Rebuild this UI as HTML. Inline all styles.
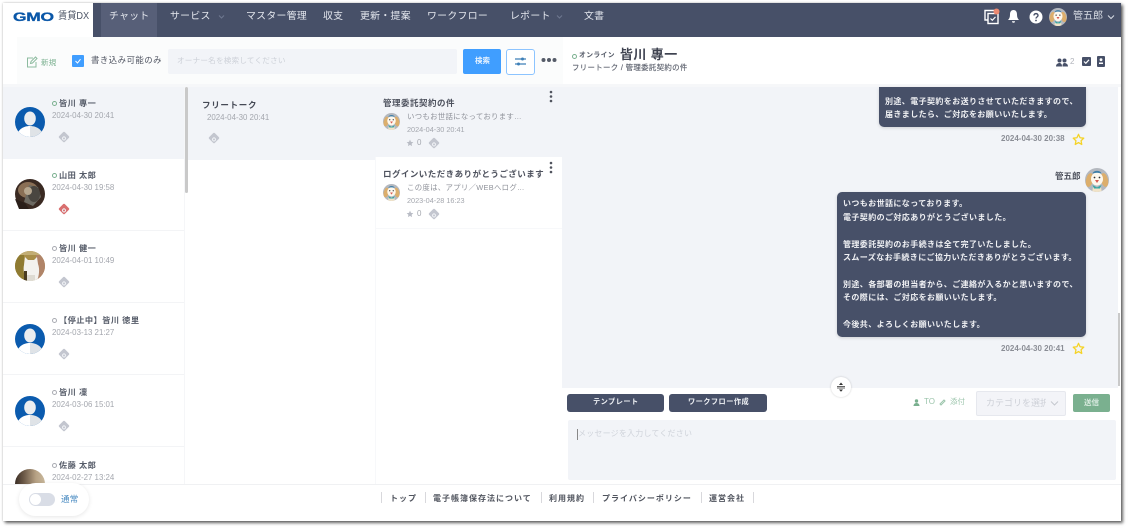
<!DOCTYPE html>
<html lang="ja"><head><meta charset="utf-8"><title>GMO賃貸DX</title>
<style>
html,body{margin:0;padding:0;width:1134px;height:530px;overflow:hidden;background:#fff}
body{position:relative;font-family:"Liberation Sans","Noto Sans CJK JP",sans-serif;color:#4a4f5c;filter:blur(.3px)}
.b{position:absolute}
.t{position:absolute;white-space:nowrap;line-height:12px;height:12px}
.nav{color:#e4e7ee;font-size:9.900px;letter-spacing:.3px;top:11px}
.name{font-size:8.200px;font-weight:bold;color:#555b68;letter-spacing:.45px;margin-top:1px}
.date{font-size:7.900px;color:#a4a7ae;margin-top:1px}
.msg{font-size:8px;font-weight:bold;color:#f0f1f4;letter-spacing:.4px;margin-top:1px}
.foot{font-size:8px;font-weight:bold;color:#50545e;letter-spacing:1px;top:493px}
.sep{position:absolute;width:1px;height:11px;top:492px;background:#d8d8dc}
.ring{position:absolute;width:3px;height:3px;border:1px solid #a9abb2;border-radius:50%}
.ring.on{border-color:#7ab08f}
.dia{position:absolute;width:8px;height:8px;transform:rotate(45deg);background:#c3c6cf;border-radius:1px}
.dia::after{content:"";position:absolute;left:2.500px;top:2.500px;width:2px;height:2px;border:1px solid #eef0f4;border-radius:50%}
.dia.red{background:#d96f6f}
.row{position:absolute;left:3px;width:181px;height:72px;border-bottom:1px solid #f3f4f6;box-sizing:border-box}
svg{position:absolute;display:block}
</style></head>
<body>
<svg width="0" height="0" style="position:absolute">
<defs>
<clipPath id="uc"><circle cx="15" cy="15" r="15"/></clipPath>
<clipPath id="mc"><circle cx="12" cy="12" r="12"/></clipPath>
<symbol id="user" viewBox="0 0 30 30"><circle cx="15" cy="15" r="15" fill="#0b5bae"/><g clip-path="url(#uc)"><ellipse cx="15" cy="11.500" rx="5.800" ry="7" fill="#eceef0"/><path d="M2 30c0-7 6-11 13-11v11z" fill="#fff"/><path d="M15 19c7 0 13 4 13 11H15z" fill="#dfe3e7"/></g></symbol>
<symbol id="masc" viewBox="0 0 24 24"><circle cx="12" cy="12" r="12" fill="#b4b8bf"/><g clip-path="url(#mc)"><path d="M8 19l4 1 4-1 1 6H7z" fill="#f1e3c8"/><ellipse cx="4.500" cy="12" rx="3.500" ry="7" fill="#dcae6c" transform="rotate(12 4.500 12)"/><ellipse cx="19.500" cy="12" rx="3.500" ry="7" fill="#dcae6c" transform="rotate(-12 19.500 12)"/><ellipse cx="12" cy="11" rx="6" ry="6.500" fill="#fdf8ee"/><path d="M7.500 5.500C8.500 2 15.500 2 16.500 5.500c-3-1-6-1-9 0z" fill="#3f7fa8"/><circle cx="9.500" cy="9.500" r=".9" fill="#333"/><circle cx="14.500" cy="9.500" r=".9" fill="#333"/><path d="M10 12h4l-2 3z" fill="#d8584f"/><path d="M7.500 17l4.500 2.500 4.500-2.500-1.500 3.500h-6z" fill="#35a5a5"/></g></symbol>
<symbol id="star" viewBox="0 0 24 24"><path d="M12 2.500l2.900 6.300 6.800.8-5 4.700 1.300 6.800-6-3.400-6 3.400 1.300-6.800-5-4.700 6.800-.8z" fill="none" stroke="#f5d327" stroke-width="2.400" stroke-linejoin="round"/></symbol>
<symbol id="sstar" viewBox="0 0 24 24"><path d="M12 2l3 6.600 7 .8-5.200 4.800 1.400 7L12 17.600 5.800 21.200l1.400-7L2 9.400l7-.8z" fill="#b9bcc5"/></symbol>
</defs></svg>

<!-- window -->
<div class="b" style="left:3px;top:3px;width:1118px;height:518px;background:#fff;box-shadow:2px 2px 3px 0 rgba(0,0,0,.6),0 0 2px rgba(0,0,0,.25)"></div>

<!-- header -->
<div class="b" style="left:93px;top:3px;width:1028px;height:34px;background:#475068"></div>
<div class="b" style="left:101px;top:3px;width:56px;height:34px;background:#575f78"></div>
<div class="t" style="left:13px;top:11px;font-size:12px;font-weight:bold;color:#0a57a8;letter-spacing:-.2px;transform:scaleX(1.450);transform-origin:left;-webkit-text-stroke:.3px #0a57a8">GMO</div>
<div class="t" style="left:58px;top:11px;font-size:10px;color:#4d5566;transform:scaleX(.92);transform-origin:left">賃貸DX</div>
<div class="t nav" style="left:109px">チャット</div>
<div class="t nav" style="left:170px">サービス</div>
<svg style="left:218px;top:14px" width="7" height="6" viewBox="0 0 7 6"><path d="M1 1.500l2.500 2.500L6 1.500" fill="none" stroke="#6f7890"/></svg>
<div class="t nav" style="left:246px">マスター管理</div>
<div class="t nav" style="left:323px">収支</div>
<div class="t nav" style="left:360px">更新・提案</div>
<div class="t nav" style="left:427px">ワークフロー</div>
<div class="t nav" style="left:510px">レポート</div>
<svg style="left:556px;top:14px" width="7" height="6" viewBox="0 0 7 6"><path d="M1 1.500l2.500 2.500L6 1.500" fill="none" stroke="#6f7890"/></svg>
<div class="t nav" style="left:584px">文書</div>
<svg style="left:983px;top:8px" width="17" height="17" viewBox="0 0 17 17"><path d="M5 12H2V2.500h9.500V5" fill="none" stroke="#fff" stroke-width="1.400"/><rect x="5" y="5.500" width="10" height="10" fill="none" stroke="#fff" stroke-width="1.400"/><path d="M7.500 10.500l1.800 1.800 3.200-3.400" fill="none" stroke="#fff" stroke-width="1.200"/><circle cx="13.500" cy="3.500" r="3" fill="#ec8a72"/></svg>
<svg style="left:1007px;top:9px" width="13" height="15" viewBox="0 0 13 15"><path d="M6.500 1C4 1 3 3 3 5.500 3 8 2.500 9.500 1 11h11c-1.500-1.500-2-3-2-5.500C10 3 9 1 6.500 1z" fill="#fff"/><path d="M5 12.300h3a1.500 1.500 0 0 1-3 0z" fill="#fff"/></svg>
<svg style="left:1029px;top:10px" width="14" height="14" viewBox="0 0 14 14"><circle cx="7" cy="7" r="6.500" fill="#fff"/><path d="M5 5.500c0-2.500 4-2.500 4 0 0 1.500-2 1.500-2 3" fill="none" stroke="#475068" stroke-width="1.400"/><circle cx="7" cy="10.500" r=".9" fill="#475068"/></svg>
<svg style="left:1049px;top:8px" width="18" height="18"><use href="#masc" width="18" height="18"/></svg>
<div class="t" style="left:1073px;top:11px;font-size:10px;color:#d8dce4">管五郎</div>
<svg style="left:1107px;top:14px" width="8" height="6" viewBox="0 0 8 6"><path d="M1 1.500l3 3 3-3" fill="none" stroke="#d8dce4"/></svg>

<!-- toolbar -->
<div class="b" style="left:17px;top:37px;width:546px;height:50px;background:#fbfcfc"></div>
<div class="b" style="left:3px;top:84px;width:1118px;height:3px;background:#f6f7f9"></div>
<svg style="left:26px;top:56px" width="12" height="12" viewBox="0 0 12 12"><path d="M7 2H1.500v9h8.500V6" fill="none" stroke="#8dbb9f" stroke-width="1"/><path d="M4.500 7.500l.5-2L9.500 1l1.500 1.500L6.500 7z" fill="none" stroke="#8dbb9f" stroke-width="1"/></svg>
<div class="t" style="left:41px;top:57px;font-size:7.500px;color:#7ab08f;letter-spacing:.3px">新規</div>
<div class="b" style="left:72px;top:55px;width:12px;height:12px;background:#409eff;border-radius:1px"></div>
<svg style="left:72px;top:55px" width="12" height="12" viewBox="0 0 12 12"><path d="M3.500 6l2 2 3-3.800" fill="none" stroke="#fff" stroke-width="1"/></svg>
<div class="t" style="left:91px;top:54px;font-size:8.400px;color:#4f5461;letter-spacing:.5px">書き込み可能のみ</div>
<div class="b" style="left:168px;top:49px;width:289px;height:25px;background:#f2f4f8;border-radius:2px"></div>
<div class="t" style="left:177px;top:55px;font-size:7.600px;color:#cdd1d8;letter-spacing:.2px">オーナー名を検索してください</div>
<div class="b" style="left:463px;top:49px;width:38px;height:25px;background:#409eff;border-radius:2px"></div>
<div class="t" style="left:475px;top:55px;font-size:7.500px;color:#eaf4ff;font-weight:bold">検索</div>
<div class="b" style="left:506px;top:49px;width:27px;height:24px;border:1px solid #8cc4ff;border-radius:3px;background:#fff"></div>
<svg style="left:514px;top:55px" width="13" height="13" viewBox="0 0 13 13"><path d="M1 4h11M1 9h11" stroke="#3d7fb8" stroke-width="1.200"/><circle cx="8.500" cy="4" r="1.500" fill="#3d7fb8"/><circle cx="4.500" cy="9" r="1.500" fill="#3d7fb8"/></svg>
<svg style="left:541px;top:57px" width="16" height="6" viewBox="0 0 16 6"><circle cx="2.500" cy="3" r="2" fill="#555b68"/><circle cx="8" cy="3" r="2" fill="#555b68"/><circle cx="13.500" cy="3" r="2" fill="#555b68"/></svg>

<!-- chat header -->
<div class="ring on" style="left:572px;top:54px"></div>
<div class="t" style="left:579px;top:50px;font-size:6.800px;font-weight:bold;color:#555b68;letter-spacing:.4px">オンライン</div>
<div class="t" style="left:620px;top:49px;font-size:13px;font-weight:bold;color:#3e4250;letter-spacing:.4px">皆川 專一</div>
<div class="t" style="left:572px;top:62px;font-size:7.400px;color:#5f6470;letter-spacing:.35px;-webkit-text-stroke:.15px #5f6470">フリートーク / 管理委託契約の件</div>
<svg style="left:1056px;top:58px" width="12" height="9" viewBox="0 0 12 9"><circle cx="3.500" cy="2.500" r="2" fill="#475068"/><circle cx="8.500" cy="2.500" r="2" fill="#475068"/><path d="M0 8.500c0-2.500 2-3.500 3.500-3.500S6 6 6 8.500zM6.500 8.500c0-2 .5-3.500 2-3.500S12 6 12 8.500z" fill="#475068"/></svg>
<div class="t" style="left:1070px;top:56px;font-size:8px;color:#b1b4bb">2</div>
<div class="b" style="left:1082px;top:57px;width:9px;height:9px;background:#475068;border-radius:1px"></div>
<svg style="left:1082px;top:57px" width="9" height="9" viewBox="0 0 9 9"><path d="M2 4.500l1.800 1.800L7 2.800" fill="none" stroke="#fff" stroke-width="1.200"/></svg>
<svg style="left:1097px;top:56px" width="8" height="11" viewBox="0 0 8 11"><rect width="8" height="11" rx="1" fill="#475068"/><circle cx="4" cy="3.700" r="1.400" fill="#fff"/><rect x="2" y="6.500" width="4" height="1.500" fill="#fff"/></svg>

<!-- column 1 -->
<div class="row" style="top:87px;background:#f2f4f8;border:0"></div>
<div class="row" style="top:159px"></div>
<div class="row" style="top:231px"></div>
<div class="row" style="top:303px"></div>
<div class="row" style="top:375px"></div>
<div class="b" style="left:184px;top:87px;width:1px;height:397px;background:#f5f6f8"></div>
<div class="b" style="left:185px;top:87px;width:3px;height:106px;background:#c9c9c9;border-radius:2px"></div>

<svg style="left:15px;top:107px" width="30" height="30"><use href="#user" width="30" height="30"/></svg>
<div class="ring on" style="left:52px;top:101px"></div><div class="t name" style="left:59px;top:97px">皆川 專一</div>
<div class="t date" style="left:52px;top:109px">2024-04-30 20:41</div><div class="dia" style="left:60px;top:133px"></div>

<svg style="left:15px;top:179px" width="30" height="30" viewBox="0 0 30 30"><circle cx="15" cy="15" r="15" fill="#3a2a22"/><ellipse cx="13" cy="11" rx="10" ry="8" fill="#8a6f55"/><path d="M14 6l9 2 3 10-8 9-9-4z" fill="#6d6a62"/><ellipse cx="19" cy="15" rx="6" ry="8" fill="#4a4640"/><ellipse cx="13" cy="12" rx="4" ry="4" fill="#b6a68e"/><path d="M0 20l10 4 4 6H4z" fill="#2a1f1a"/></svg>
<div class="ring on" style="left:52px;top:173px"></div><div class="t name" style="left:59px;top:169px">山田 太郎</div>
<div class="t date" style="left:52px;top:181px">2024-04-30 19:58</div><div class="dia red" style="left:60px;top:205px"></div>

<svg style="left:15px;top:251px" width="30" height="30" viewBox="0 0 30 30"><clipPath id="c2"><circle cx="15" cy="15" r="15"/></clipPath><g clip-path="url(#c2)"><rect width="30" height="30" fill="#a98f4a"/><rect x="0" width="9" height="30" fill="#8f7b32"/><rect x="21" width="9" height="30" fill="#b08468"/><rect x="0" y="0" width="30" height="4" fill="#c2ad74"/><path d="M10 6l3 3h6l3-3 1 7c2 5 1 12-1 17H11c-2-6-3-12-2-16z" fill="#f3f2ee"/><path d="M12 24h8v6h-8z" fill="#dedbd2"/><rect x="9" y="20" width="3" height="10" fill="#4a3c22"/></g></svg>
<div class="ring" style="left:52px;top:246px"></div><div class="t name" style="left:59px;top:242px">皆川 健一</div>
<div class="t date" style="left:52px;top:254px">2024-04-01 10:49</div><div class="dia" style="left:60px;top:278px"></div>

<svg style="left:15px;top:324px" width="30" height="30"><use href="#user" width="30" height="30"/></svg>
<div class="ring" style="left:52px;top:318px"></div><div class="t name" style="left:59px;top:314px">【停止中】皆川 徳里</div>
<div class="t date" style="left:52px;top:326px">2024-03-13 21:27</div><div class="dia" style="left:60px;top:350px"></div>

<svg style="left:15px;top:396px" width="30" height="30"><use href="#user" width="30" height="30"/></svg>
<div class="ring" style="left:52px;top:390px"></div><div class="t name" style="left:59px;top:386px">皆川 凜</div>
<div class="t date" style="left:52px;top:398px">2024-03-06 15:01</div><div class="dia" style="left:60px;top:422px"></div>

<div class="b" style="left:15px;top:469px;width:30px;height:15px;border-radius:15px 15px 0 0;background:linear-gradient(90deg,#3a2d25 0,#6d5a48 30%,#b7a285 70%,#c9b89c)"></div>
<div class="ring" style="left:52px;top:463px"></div><div class="t name" style="left:59px;top:459px">佐藤 太郎</div>
<div class="t date" style="left:52px;top:471px">2024-02-27 13:24</div>

<!-- column 2 -->
<div class="b" style="left:188px;top:87px;width:187px;height:73px;background:#f2f4f8"></div>
<div class="t" style="left:202px;top:99px;font-size:8.500px;font-weight:bold;color:#454955;letter-spacing:.7px">フリートーク</div>
<div class="t date" style="left:207px;top:111px">2024-04-30 20:41</div>
<div class="dia" style="left:210px;top:134px"></div>
<div class="b" style="left:375px;top:87px;width:1px;height:397px;background:#f7f8fa"></div>

<!-- column 3 -->
<div class="b" style="left:375px;top:87px;width:187px;height:70px;background:#f2f4f8"></div>
<div class="b" style="left:376px;top:157px;width:186px;height:72px;background:#fff;border-bottom:1px solid #f7f8fa;box-sizing:border-box"></div>
<div class="t" style="left:383px;top:97px;font-size:8.500px;font-weight:bold;color:#4e525e;letter-spacing:.5px">管理委託契約の件</div>
<svg style="left:383px;top:113px" width="17" height="17"><use href="#masc" width="17" height="17"/></svg>
<div class="t" style="left:407px;top:111px;font-size:7.400px;color:#8f929a;letter-spacing:.3px">いつもお世話になっております…</div>
<div class="t date" style="left:407px;top:123px;font-size:7.300px">2024-04-30 20:41</div>
<svg style="left:406px;top:139px" width="8" height="8"><use href="#sstar" width="8" height="8"/></svg>
<div class="t" style="left:417px;top:137px;font-size:8px;color:#a4a7ae">0</div>
<div class="dia" style="left:430px;top:139px"></div>
<svg style="left:549px;top:90px" width="4" height="13" viewBox="0 0 4 13"><circle cx="2" cy="2" r="1.300" fill="#50545e"/><circle cx="2" cy="6.500" r="1.300" fill="#50545e"/><circle cx="2" cy="11" r="1.300" fill="#50545e"/></svg>

<div class="t" style="left:383px;top:168px;font-size:8.500px;font-weight:bold;color:#4e525e;letter-spacing:.45px">ログインいただきありがとうございます</div>
<svg style="left:383px;top:184px" width="17" height="17"><use href="#masc" width="17" height="17"/></svg>
<div class="t" style="left:407px;top:182px;font-size:7.400px;color:#8f929a;letter-spacing:.3px">この度は、アプリ／WEBへログ…</div>
<div class="t date" style="left:407px;top:194px;font-size:7.300px">2023-04-28 16:23</div>
<svg style="left:406px;top:210px" width="8" height="8"><use href="#sstar" width="8" height="8"/></svg>
<div class="t" style="left:417px;top:208px;font-size:8px;color:#a4a7ae">0</div>
<div class="dia" style="left:430px;top:210px"></div>
<svg style="left:549px;top:161px" width="4" height="13" viewBox="0 0 4 13"><circle cx="2" cy="2" r="1.300" fill="#50545e"/><circle cx="2" cy="6.500" r="1.300" fill="#50545e"/><circle cx="2" cy="11" r="1.300" fill="#50545e"/></svg>

<!-- chat -->
<div class="b" style="left:562px;top:87px;width:556px;height:301px;background:#f2f4f8"></div>
<div class="b" style="left:1118px;top:313px;width:2px;height:73px;background:#c9c9c9"></div>
<div class="b" style="left:879px;top:87px;width:207px;height:40px;background:#475068;border-radius:0 0 5px 5px;box-shadow:0 1px 3px rgba(0,0,0,.15)"></div>
<div class="t msg" style="left:885px;top:95px">別途、電子契約をお送りさせていただきますので、</div>
<div class="t msg" style="left:885px;top:108px">届きましたら、ご対応をお願いいたします。</div>
<div class="t" style="left:1001px;top:133px;font-size:8px;font-weight:bold;color:#8b8e96">2024-04-30 20:38</div>
<svg style="left:1072px;top:133px" width="13" height="13"><use href="#star" width="13" height="13"/></svg>
<div class="t" style="left:1055px;top:170px;font-size:8.500px;font-weight:bold;color:#4e525e">管五郎</div>
<svg style="left:1085px;top:168px" width="24" height="24"><use href="#masc" width="24" height="24"/></svg>
<div class="b" style="left:837px;top:192px;width:249px;height:145px;background:#475068;border-radius:5px;box-shadow:0 1px 3px rgba(0,0,0,.15)"></div>
<div class="t msg" style="left:843px;top:197px">いつもお世話になっております。</div>
<div class="t msg" style="left:843px;top:211px">電子契約のご対応ありがとうございました。</div>
<div class="t msg" style="left:843px;top:238px">管理委託契約のお手続きは全て完了いたしました。</div>
<div class="t msg" style="left:843px;top:251px">スムーズなお手続きにご協力いただきありがとうございます。</div>
<div class="t msg" style="left:843px;top:278px">別途、各部署の担当者から、ご連絡が入るかと思いますので、</div>
<div class="t msg" style="left:843px;top:291px">その際には、ご対応をお願いいたします。</div>
<div class="t msg" style="left:843px;top:318px">今後共、よろしくお願いいたします。</div>
<div class="t" style="left:1001px;top:343px;font-size:8px;font-weight:bold;color:#8b8e96">2024-04-30 20:41</div>
<svg style="left:1072px;top:342px" width="13" height="13"><use href="#star" width="13" height="13"/></svg>

<!-- composer -->
<div class="b" style="left:831px;top:377px;width:20px;height:20px;border-radius:50%;background:#fff;box-shadow:0 0 2px rgba(0,0,0,.2)"></div>
<svg style="left:836px;top:382px" width="10" height="10" viewBox="0 0 10 10"><path d="M1 4.500h8M1 6h8" stroke="#333" stroke-width=".8"/><path d="M5 .5L3 3h4zM5 9.800L3 7.500h4z" fill="#333"/></svg>
<div class="b" style="left:567px;top:394px;width:97px;height:18px;background:#475068;border-radius:3px"></div>
<div class="t" style="left:593px;top:396px;font-size:7.200px;font-weight:bold;color:#eef0f4;letter-spacing:.45px">テンプレート</div>
<div class="b" style="left:669px;top:394px;width:98px;height:18px;background:#475068;border-radius:3px"></div>
<div class="t" style="left:688px;top:396px;font-size:7.200px;font-weight:bold;color:#eef0f4;letter-spacing:.45px">ワークフロー作成</div>
<svg style="left:913px;top:399px" width="7" height="7" viewBox="0 0 7 7"><circle cx="3.500" cy="2" r="1.700" fill="#7ab08f"/><path d="M.5 7c0-2 1.500-3 3-3s3 1 3 3z" fill="#7ab08f"/></svg>
<div class="t" style="left:924px;top:396px;font-size:8px;color:#9cc5ac">TO</div>
<svg style="left:939px;top:399px" width="7" height="7" viewBox="0 0 7 7"><path d="M1 5l4-4 1 1-4 4z" fill="none" stroke="#9cc5ac"/></svg>
<div class="t" style="left:950px;top:396px;font-size:7.500px;color:#9cc5ac">添付</div>
<div class="b" style="left:976px;top:391px;width:90px;height:25px;box-sizing:border-box;background:#f3f4f8;border:1px solid #e6e8ee;border-radius:2px"></div>
<div class="t" style="left:986px;top:397px;width:60px;overflow:hidden;font-size:9px;color:#cdd0d7">カテゴリを選択</div>
<svg style="left:1050px;top:400px" width="9" height="7" viewBox="0 0 9 7"><path d="M1 1.500l3.500 3.500L8 1.500" fill="none" stroke="#c5c8cf"/></svg>
<div class="b" style="left:1073px;top:394px;width:37px;height:18px;background:#7ab08f;border-radius:2px"></div>
<div class="t" style="left:1084px;top:397px;font-size:7.500px;font-weight:bold;color:#d8eadf">送信</div>
<div class="b" style="left:568px;top:420px;width:548px;height:60px;background:#f2f4f8;border-radius:2px"></div>
<div class="b" style="left:577px;top:429px;width:1px;height:11px;background:#888"></div>
<div class="t" style="left:578px;top:428px;font-size:8px;color:#cfd3da;letter-spacing:.2px">メッセージを入力してください</div>

<!-- footer -->
<div class="b" style="left:3px;top:484px;width:1118px;height:37px;background:#fff;border-top:1px solid #f0f1f3;box-sizing:border-box"></div>
<div class="b" style="left:19px;top:483px;width:70px;height:33px;background:#fff;border-radius:17px;box-shadow:0 1px 5px rgba(0,0,0,.1)"></div>
<div class="b" style="left:29px;top:493px;width:26px;height:13px;background:#d9dde6;border-radius:7px"></div>
<div class="b" style="left:30px;top:494px;width:11px;height:11px;background:#fff;border-radius:50%"></div>
<div class="t" style="left:61px;top:493px;font-size:8.500px;color:#4a8bc2;letter-spacing:.3px">通常</div>
<div class="sep" style="left:381px"></div>
<div class="t foot" style="left:390px">トップ</div>
<div class="sep" style="left:425px"></div>
<div class="t foot" style="left:433px">電子帳簿保存法について</div>
<div class="sep" style="left:541px"></div>
<div class="t foot" style="left:549px">利用規約</div>
<div class="sep" style="left:593px"></div>
<div class="t foot" style="left:602px">プライバシーポリシー</div>
<div class="sep" style="left:701px"></div>
<div class="t foot" style="left:709px">運営会社</div>
<div class="sep" style="left:753px"></div>
</body></html>
